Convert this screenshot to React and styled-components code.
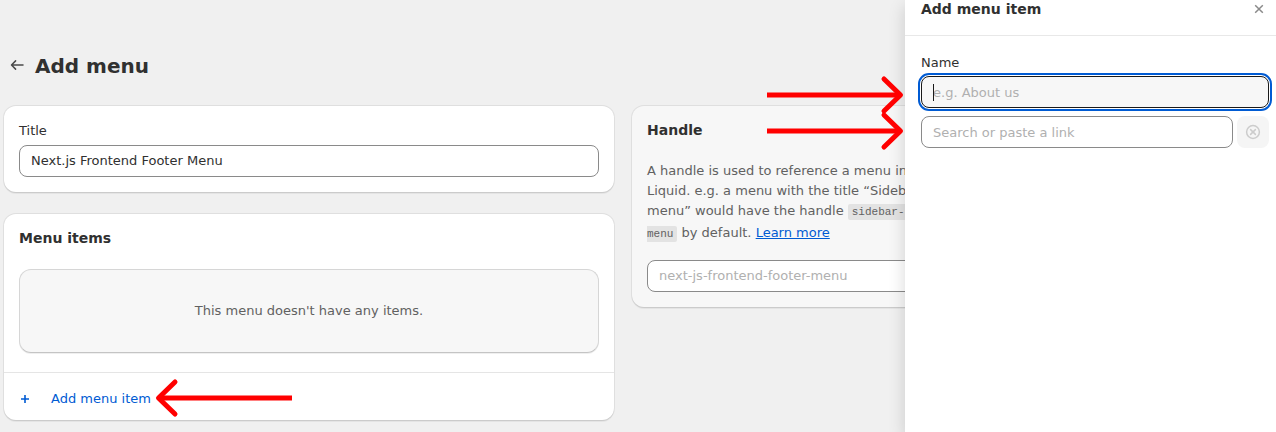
import React from "react";
import styled, { createGlobalStyle } from "styled-components";

const GlobalStyle = createGlobalStyle`
  *, *::before, *::after { box-sizing: border-box; }
  body {
    margin: 0;
    background: #f0f0f0;
    color: #303030;
    font: 13px/20px "DejaVu Sans", Verdana, sans-serif;
    overflow: hidden;
  }
`;

const Screen = styled.div`
  position: relative;
  display: flex;
  height: 432px;
  overflow: hidden;
`;

const Page = styled.main`
  flex: 0 0 905px;
  padding: 52px 0 0 4px;
  overflow: hidden;
`;

const PageHeader = styled.header`
  display: flex;
  align-items: center;
  height: 28px;
  gap: 8px;
  padding-left: 3px;
  margin-bottom: 26px;
`;

const BackIcon = styled.svg`
  width: 20px;
  height: 20px;
  margin-top: -2px;
`;

const PageTitle = styled.h1`
  margin: 0;
  font-size: 20px;
  line-height: 28px;
  font-weight: 700;
`;

const Columns = styled.div`
  display: flex;
  align-items: flex-start;
  gap: 18px;
`;

const MainColumn = styled.div`
  flex: 0 0 610px;
  display: flex;
  flex-direction: column;
  gap: 22px;
`;

const Card = styled.section`
  height: ${(p) => p.$height}px;
  width: ${(p) => p.$width || 610}px;
  flex: none;
  padding: ${(p) => p.$pad || "14px 15px"};
  border-radius: 12px;
  background: ${(p) => (p.$subdued ? "#f7f7f7" : "#fff")};
  box-shadow: 0 1px 0 0 #cbcbcb, 0 0 0 1px #dfdfdf, 0 2px 0 0 #e4e4e4;
`;

const Label = styled.label`
  display: block;
  margin-bottom: ${(p) => p.$gap || 4}px;
`;

const CardTitle = styled.h2`
  margin: 0;
  padding: 0 ${(p) => p.$inset || 0}px;
  font-size: 14px;
  line-height: 20px;
  font-weight: 700;
`;

const TextInput = styled.input`
  display: block;
  width: 100%;
  min-width: 0;
  height: 32px;
  padding: ${(p) => (p.$low ? "1px 11px 0" : "0 11px 1px")};
  border: 1px solid ${(p) => (p.$focused ? "#1a1a1a" : "#8a8a8a")};
  border-radius: 8px;
  background: ${(p) => (p.$focused ? "#f7f7f7" : "#fff")};
  outline: ${(p) => (p.$focused ? "2px solid #005bd3" : "none")};
  outline-offset: 1px;
  color: #303030;
  font: inherit;
  &::placeholder { color: #b0b0b0; opacity: 1; }
`;

const EmptyState = styled.div`
  display: flex;
  align-items: center;
  justify-content: center;
  height: 84px;
  margin: 21px 15px 19px;
  border: 1px solid #d6d6d6;
  border-bottom-color: #c4c4c4;
  border-radius: 12px;
  background: #f7f7f7;
  box-shadow: 0 1px 0 0 #efefef;
  color: #616161;
`;

const AddRow = styled.button`
  display: flex;
  align-items: center;
  width: 100%;
  height: 48px;
  padding: 4px 16px 0;
  border: 0;
  border-top: 1px solid #e5e5e5;
  background: none;
  color: #005bd3;
  font: inherit;
  gap: 21px;
`;

const PlusIcon = styled.svg`
  width: 10px;
  height: 10px;
`;

const Help = styled.p`
  width: 288px;
  margin: 21px 0 15px;
  color: #616161;
`;

const Code = styled.code`
  padding: 2px 4px;
  border-radius: 2px;
  background: #e3e3e3;
  font: 11px/22px "Liberation Mono", monospace;
`;

const Link = styled.a`
  color: #005bd3;
  text-decoration: underline;
`;

const Drawer = styled.aside`
  position: relative;
  flex: 1;
  background: #fff;
  box-shadow: 0 6px 16px rgba(0, 0, 0, 0.16);
`;

const DrawerHeader = styled.header`
  display: flex;
  align-items: center;
  justify-content: space-between;
  height: 36px;
  padding: 0 12px 18px 16px;
  border-bottom: 1px solid #e8e8e8;
`;

const CloseIcon = styled.svg`
  width: 10px;
  height: 10px;
`;

const DrawerBody = styled.div`
  padding: 17px 7px 0 16px;
`;

const LinkRow = styled.div`
  display: flex;
  gap: 4px;
  margin-top: 8px;
`;

const ClearButton = styled.button`
  display: grid;
  place-items: center;
  flex: 0 0 32px;
  height: 32px;
  padding: 0;
  border: 0;
  border-radius: 8px;
  background: #f5f5f5;
`;

const FocusedField = styled.div`
  position: relative;
`;

const Caret = styled.span`
  position: absolute;
  left: 12px;
  top: 8px;
  width: 1px;
  height: 17px;
  background: #1a1a1a;
`;

const ArrowLayer = styled.svg`
  position: absolute;
  inset: 0;
  pointer-events: none;
`;

function Arrow({ tail, tip, y }) {
  const wing = tail < tip ? tip - 16.5 : tip + 16.5;
  return (
    <g fill="none" stroke="#f00" strokeWidth="5">
      <path d={`M${tail} ${y}H${tip}`} />
      <path
        d={`M${wing} ${y - 16}L${tip} ${y}L${wing} ${y + 16}`}
        strokeLinecap="round"
        strokeLinejoin="round"
      />
    </g>
  );
}

export default function App() {
  return (
    <>
      <GlobalStyle />
      <Screen>
        <Page>
          <PageHeader>
            <BackIcon viewBox="0 0 20 20" fill="none" stroke="#4a4a4a" strokeWidth="1.5" strokeLinecap="round" strokeLinejoin="round">
              <path d="M16 10H4.6M8.6 5.9L4.5 10l4.1 4.1" />
            </BackIcon>
            <PageTitle>Add menu</PageTitle>
          </PageHeader>
          <Columns>
            <MainColumn>
              <Card $height={86} $pad="15px 15px 14px">
                <Label htmlFor="title">Title</Label>
                <TextInput id="title" defaultValue="Next.js Frontend Footer Menu" />
              </Card>
              <Card $height={206} $pad="14px 0 0">
                <CardTitle $inset={15}>Menu items</CardTitle>
                <EmptyState>This menu doesn't have any items.</EmptyState>
                <AddRow type="button">
                  <PlusIcon viewBox="0 0 10 10" fill="none" stroke="#005bd3" strokeWidth="1.6">
                    <path d="M5 1v8M1 5h8" />
                  </PlusIcon>
                  Add menu item
                </AddRow>
              </Card>
            </MainColumn>
            <Card $height={201} $width={318} $subdued>
              <CardTitle>Handle</CardTitle>
              <Help>
                A handle is used to reference a menu in Liquid. e.g. a menu with the title “Sidebar
                menu” would have the handle <Code>sidebar-<br />menu</Code> by default.{" "}
                <Link>Learn more</Link>
              </Help>
              <TextInput placeholder="next-js-frontend-footer-menu" />
            </Card>
          </Columns>
        </Page>
        <Drawer>
          <DrawerHeader>
            <CardTitle>Add menu item</CardTitle>
            <CloseIcon viewBox="0 0 10 10" fill="none" stroke="#8a8a8a" strokeWidth="1.5">
              <path d="M1.2 1.2l7.6 7.6M8.8 1.2L1.2 8.8" />
            </CloseIcon>
          </DrawerHeader>
          <DrawerBody>
            <Label htmlFor="name" $gap={3}>Name</Label>
            <FocusedField>
              <TextInput id="name" placeholder="e.g. About us" $focused $low />
              <Caret />
            </FocusedField>
            <LinkRow>
              <TextInput placeholder="Search or paste a link" $low />
              <ClearButton type="button" aria-label="Clear">
                <svg width="16" height="16" viewBox="0 0 16 16" fill="none" stroke="#ccc" strokeWidth="1.5" strokeLinecap="round">
                  <circle cx="8" cy="8" r="6.4" />
                  <path d="M5.6 5.6l4.8 4.8M10.4 5.6l-4.8 4.8" />
                </svg>
              </ClearButton>
            </LinkRow>
          </DrawerBody>
        </Drawer>
        <ArrowLayer width="1276" height="432" viewBox="0 0 1276 432">
          <Arrow tail={767} tip={900.5} y={95} />
          <Arrow tail={767} tip={900.5} y={131} />
          <Arrow tail={292} tip={158.5} y={398} />
        </ArrowLayer>
      </Screen>
    </>
  );
}
